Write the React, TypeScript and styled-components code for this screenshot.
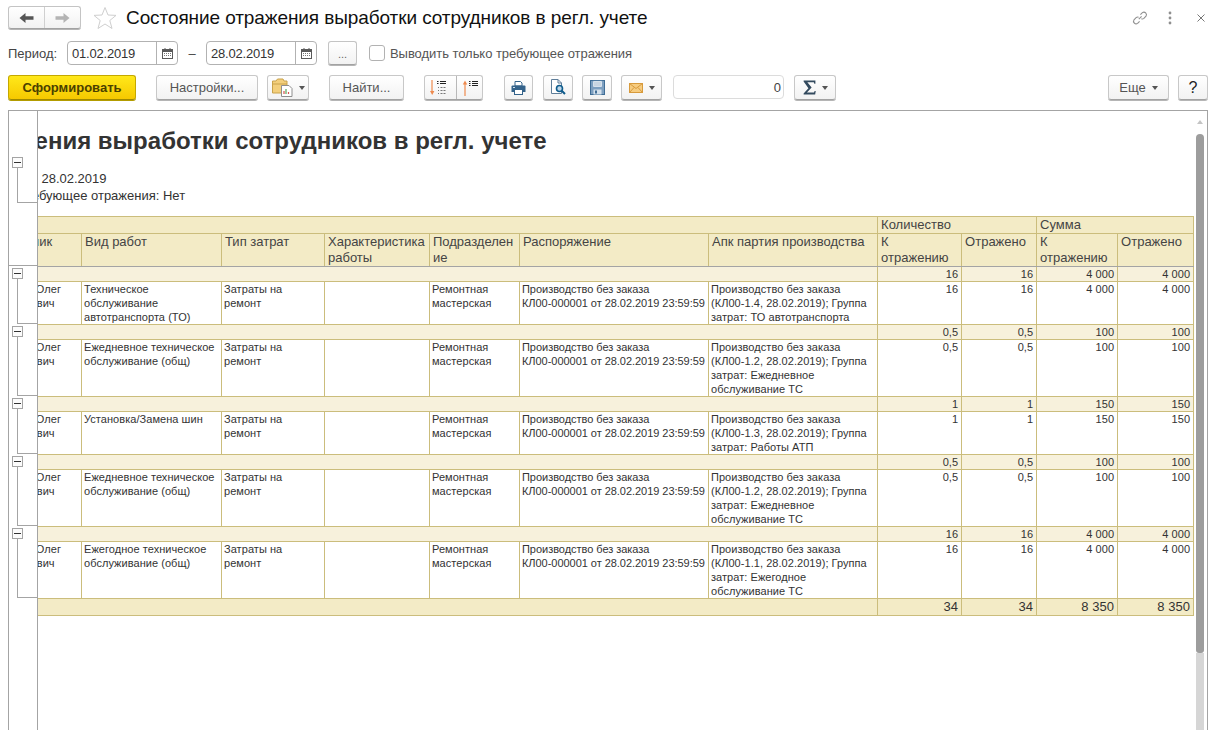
import styled, {createGlobalStyle} from "styled-components";
import type {ReactNode} from "react";

const GlobalStyle = createGlobalStyle`
  html, body {
    margin: 0;
    height: 100%;
    background: #fff;
    overflow: hidden;
  }
  #root {
    height: 100%;
  }
`;

const Page = styled.div`
  height: 730px;
  display: flex;
  flex-direction: column;
  padding: 5px 6px 0 8px;
  box-sizing: border-box;
  font-family: "Liberation Sans", Arial, sans-serif;
  font-size: 13px;
  color: #333;
  overflow: hidden;
`;

const TitleRow = styled.div`
  display: flex;
  align-items: center;
  height: 25px;
`;

const NavGroup = styled.div`
  display: flex;
  width: 73px;
  height: 23px;
  box-sizing: border-box;
  border: 1px solid #c4c4c4;
  border-bottom-color: #a2a2a2;
  border-radius: 3px;
  background: linear-gradient(#fff, #f2f2f2);
  box-shadow: 0 1px 0 #b5b5b5;
`;

const NavCell = styled.div<{$divider?: boolean}>`
  flex: 1;
  display: flex;
  align-items: center;
  justify-content: center;
  border-left: ${p => (p.$divider ? "1px solid #d0d0d0" : "none")};
`;

const StarWrap = styled.div`
  display: flex;
  margin-left: 12px;
`;

const WindowTitle = styled.h1`
  margin: 0 0 0 9px;
  font-size: 19px;
  font-weight: 400;
  color: #111;
  letter-spacing: -0.09px;
  white-space: nowrap;
`;

const WindowTools = styled.div`
  margin-left: auto;
  display: flex;
  align-items: center;
  gap: 20px;
  padding-right: 3px;
`;

const FilterRow = styled.div`
  display: flex;
  align-items: center;
  height: 24px;
  margin-top: 11px;
`;

const FieldLabel = styled.span`
  width: 59px;
  color: #444;
`;

const DateField = styled.div`
  display: flex;
  width: 111px;
  height: 24px;
  box-sizing: border-box;
  border: 1px solid #b2b2b2;
  border-radius: 4px;
  background: #fff;
`;

const DateValue = styled.div`
  flex: 1;
  display: flex;
  align-items: center;
  padding-left: 4px;
  color: #333;
  letter-spacing: -0.2px;
`;

const CalendarCell = styled.div`
  width: 20px;
  display: flex;
  align-items: center;
  justify-content: center;
  border-left: 1px solid #b2b2b2;
`;

const Dash = styled.span`
  width: 28px;
  text-align: center;
  color: #444;
`;

const DotsButton = styled.div`
  width: 29px;
  height: 24px;
  margin: -1px 0 0 11px;
  padding-top: 3px;
  box-sizing: border-box;
  display: flex;
  align-items: center;
  justify-content: center;
  border: 1px solid #c4c4c4;
  border-bottom-color: #a2a2a2;
  border-radius: 3px;
  background: linear-gradient(#fff, #f2f2f2);
  box-shadow: 0 1px 0 #b5b5b5;
  color: #666;
  font-size: 11px;
`;

const CheckBox = styled.span`
  width: 14px;
  height: 14px;
  margin-left: 12px;
  border: 1px solid #b2b2b2;
  border-radius: 3px;
  background: #fff;
`;

const CheckLabel = styled.span`
  margin-left: 5px;
  color: #555;
  letter-spacing: -0.05px;
`;

const CommandRow = styled.div`
  display: flex;
  align-items: flex-start;
  height: 26px;
  margin-top: 10px;
`;

const Button = styled.div<{$w: number; $ml?: number; $primary?: boolean; $strong?: boolean}>`
  width: ${p => p.$w}px;
  height: 25px;
  margin-left: ${p => p.$ml ?? 0}px;
  flex: none;
  box-sizing: border-box;
  display: flex;
  align-items: center;
  justify-content: center;
  gap: 6px;
  border: 1px solid ${p => (p.$primary ? "#c4a800" : "#c8c8c8")};
  border-bottom-color: ${p => (p.$primary ? "#a08a00" : "#a2a2a2")};
  border-radius: 3px;
  background: ${p => (p.$primary ? "linear-gradient(#ffe81a, #f6c900)" : "linear-gradient(#fff, #f2f2f2)")};
  box-shadow: 0 1px 0 ${p => (p.$primary ? "#b39c00" : "#b5b5b5")};
  color: ${p => (p.$primary ? "#4a4000" : p.$strong ? "#222" : "#555")};
  font-size: ${p => (p.$strong ? 16 : 13)}px;
  font-weight: ${p => (p.$primary ? 700 : 400)};
`;

const CommandSpacer = styled.div`
  flex: 1;
`;

const SplitCell = styled.div<{$divider?: boolean}>`
  flex: 1;
  height: 100%;
  display: flex;
  align-items: center;
  justify-content: center;
  border-left: ${p => (p.$divider ? "1px solid #b8b8b8" : "none")};
`;

const Caret = styled.span`
  width: 0;
  height: 0;
  border: 3px solid transparent;
  border-top: 4px solid #555;
  border-bottom: 0;
`;

const SumField = styled.div`
  width: 111px;
  height: 24px;
  margin-left: 11px;
  flex: none;
  box-sizing: border-box;
  display: flex;
  align-items: center;
  justify-content: flex-end;
  padding-right: 2px;
  border: 1px solid #dcdcdc;
  border-radius: 4px;
  color: #444;
`;

const Panel = styled.div`
  flex: 1;
  min-height: 0;
  display: flex;
  margin-top: 9px;
  border: 1px solid #a4a4a4;
  border-bottom: 0;
`;

const Gutter = styled.div`
  width: 28px;
  flex: none;
  display: flex;
  flex-direction: column;
  border-right: 1px solid #a4a4a4;
`;

const GutterSpace = styled.div<{$h: number}>`
  height: ${p => p.$h}px;
  flex: none;
`;

const GutterRule = styled.div`
  height: 1px;
  flex: none;
  background: #a4a4a4;
`;

const OutlineGroup = styled.div<{$h: number}>`
  height: ${p => p.$h}px;
  flex: none;
  display: flex;
  flex-direction: column;
  padding-left: 3px;
`;

const OutlineBox = styled.div`
  width: 11px;
  height: 11px;
  flex: none;
  box-sizing: border-box;
  display: flex;
  align-items: center;
  justify-content: center;
  border: 1px solid #a4a4a4;
  background: #fcfcfc;

  &::before {
    content: "";
    width: 7px;
    height: 1px;
    background: #333;
  }
`;

const OutlineStem = styled.div`
  flex: 1;
  margin-left: 5px;
  border-left: 1px solid #a4a4a4;
  border-bottom: 1px solid #a4a4a4;
`;

const ReportClip = styled.div`
  flex: 1;
  min-width: 0;
  overflow: hidden;
`;

const Report = styled.div`
  margin-left: -108px;
  width: 1300px;
`;

const ReportTitle = styled.h2`
  margin: 0 0 0 -100px;
  padding: 15px 0 0 0;
  height: 29px;
  font-size: 24px;
  line-height: 29px;
  font-weight: 700;
  color: #333;
  white-space: nowrap;
`;

const ReportLine = styled.div<{$first?: boolean}>`
  height: 17px;
  line-height: 17px;
  margin-top: ${p => (p.$first ? 15 : 0)}px;
  margin-left: -18px;
  color: #333;
  white-space: nowrap;
`;

const Table = styled.table`
  margin: 12px 0 0 55px;
  table-layout: fixed;
  width: 1208px;
  border-collapse: collapse;
  font-size: 11px;
  color: #333;
`;

const Head = styled.th<{$tall?: boolean}>`
  padding: 0 2px 0 3px;
  background: #f3ebc6;
  border: 1px solid #cbbd7c;
  border-bottom-color: ${p => (p.$tall ? "#a4a4a4" : "#cbbd7c")};
  font-size: 13px;
  font-weight: 400;
  line-height: 16px;
  text-align: left;
  vertical-align: top;
  color: #444;
  overflow-wrap: anywhere;
`;

const Cell = styled.td<{$num?: boolean; $nowrap?: boolean}>`
  padding: 0 3px 0 2px;
  border: 1px solid #cbbd7c;
  line-height: 14px;
  vertical-align: top;
  text-align: ${p => (p.$num ? "right" : "left")};
  white-space: ${p => (p.$nowrap ? "nowrap" : "normal")};
  letter-spacing: ${p => (p.$nowrap ? -0.04 : 0.05)}px;
`;

const GroupRow = styled.tr`
  height: 15px;
  background: #f7f1dc;
`;

const TotalRow = styled.tr`
  height: 17px;
  background: #f3ebc6;

  td {
    font-size: 13px;
    line-height: 16px;
  }
`;

const ScrollBar = styled.div`
  width: 8px;
  margin: 0 3px 0 0;
  flex: none;
  display: flex;
  flex-direction: column;
`;

const ScrollArrow = styled.div`
  height: 23px;
  flex: none;
  display: flex;
  justify-content: center;
  padding-top: 9px;
  box-sizing: border-box;

  &::before {
    content: "";
    width: 0;
    height: 0;
    border: 3px solid transparent;
    border-top: 0;
    border-bottom: 4px solid #c4c4c4;
  }
`;

const ScrollThumb = styled.div`
  height: 519px;
  flex: none;
  border-radius: 4px 4px 3px 3px;
  background: #9d9d9d;
`;

const ScrollTrack = styled.div`
  flex: 1;
  background: #d6d6d6;
`;

const NavArrow = ({dir, color}: {dir: "left" | "right"; color: string}) => (
  <svg width="15" height="12" viewBox="0 0 15 12" style={{transform: dir === "right" ? "scaleX(-1)" : undefined}}>
    <path d="M0.5 6 L6.5 1 V4.3 H14.5 V7.7 H6.5 V11 Z" fill={color}/>
  </svg>
);

const StarIcon = () => (
  <svg width="24" height="24" viewBox="0 0 24 24">
    <path d="M12 1.5 L15 9 L23 9.4 L16.8 14.5 L19 22.5 L12 18 L5 22.5 L7.2 14.5 L1 9.4 L9 9 Z" fill="none" stroke="#cfcfcf" strokeWidth="1"/>
  </svg>
);

const LinkIcon = () => (
  <svg width="16" height="16" viewBox="0 0 16 16" fill="none" stroke="#8f8f8f" strokeWidth="1.1">
    <path d="M6.8 9.2 L9.6 6.4"/>
    <path d="M8.4 4.6 L10.4 2.6 A2.6 2.6 0 0 1 14 6.2 L11.9 8.3 A2.6 2.6 0 0 1 9.4 8.8"/>
    <path d="M7.6 11.4 L5.6 13.4 A2.6 2.6 0 0 1 2 9.8 L4.1 7.7 A2.6 2.6 0 0 1 6.6 7.2"/>
  </svg>
);

const DotsIcon = () => (
  <svg width="4" height="14" viewBox="0 0 4 14" fill="#8f8f8f">
    <circle cx="2" cy="2" r="1.4"/>
    <circle cx="2" cy="7" r="1.4"/>
    <circle cx="2" cy="12" r="1.4"/>
  </svg>
);

const CloseIcon = () => (
  <svg width="13" height="8" viewBox="-5 0 13 8" stroke="#777" strokeWidth="1" fill="none">
    <path d="M0.5 0.5 L7.5 7.5 M7.5 0.5 L0.5 7.5"/>
  </svg>
);

const CalendarIcon = () => (
  <svg width="11" height="11" viewBox="0 0 11 11">
    <rect x="0.5" y="1.5" width="10" height="9" fill="#fff" stroke="#5a5a5a"/>
    <rect x="0" y="1" width="11" height="3" fill="#5a5a5a"/>
    <path d="M3 0 V2 M8 0 V2" stroke="#5a5a5a"/>
    <path d="M2 5.5 H9 M2 7.5 H9" stroke="#777" strokeDasharray="1 1"/>
  </svg>
);

const FolderIcon = () => (
  <svg width="21" height="19" viewBox="0 0 21 19">
    <path d="M0.5 3 H4 L5.5 1 H11 L12 3 H15 V15 H0.5 Z" fill="#f3cf7c" stroke="#c9a24a"/>
    <path d="M0.5 6 H15" stroke="#c9a24a"/>
    <path d="M9.5 7.5 H17 L20 10.5 V18.5 H9.5 Z" fill="#fff" stroke="#8e8e8e"/>
    <path d="M12 16 V13 M16.5 16 V14" stroke="#d9534f" strokeWidth="1.2"/>
    <path d="M14 16 V11" stroke="#5aa55a" strokeWidth="1.2"/>
  </svg>
);

const SortDownIcon = () => (
  <svg width="16" height="16" viewBox="0 0 16 16">
    <path d="M2 0 V13" stroke="#ee8a4e" strokeWidth="1.2"/>
    <path d="M0 11 H4.4 L2.2 15 Z" fill="#ee8a4e"/>
    <path d="M7 1.5 H8.5 M10 1.5 H16 M7 3.5 H8.5 M10 3.5 H16" stroke="#222"/>
    <path d="M8 7.5 H9 M10.5 7.5 H16 M8 10.5 H9 M10.5 10.5 H16 M8 13.5 H9 M10.5 13.5 H16" stroke="#777" strokeDasharray="2 1"/>
  </svg>
);

const SortUpIcon = () => (
  <svg width="16" height="16" viewBox="0 0 16 16">
    <path d="M3 3 V16" stroke="#ee8a4e" strokeWidth="1.2"/>
    <path d="M0.8 4.5 H5.2 L3 0.5 Z" fill="#ee8a4e"/>
    <path d="M7 1.5 H8.5 M10 1.5 H16 M7 3.5 H8.5 M10 3.5 H16 M7 5.5 H8.5 M10 5.5 H16" stroke="#222"/>
  </svg>
);

const PrintIcon = () => (
  <svg width="15" height="14" viewBox="0 0 15 14">
    <path d="M4 0.5 H9.5 L11 2 V5 H4 Z" fill="#fff" stroke="#33628a"/>
    <path d="M1.5 4.5 H13.5 Q14.5 4.5 14.5 5.5 V11 H0.5 V5.5 Q0.5 4.5 1.5 4.5Z" fill="#33628a"/>
    <rect x="3.5" y="8.5" width="8" height="5" fill="#fff" stroke="#33628a"/>
    <rect x="2" y="6" width="2" height="1" fill="#cfe0ee"/>
  </svg>
);

const PreviewIcon = () => (
  <svg width="15" height="17" viewBox="0 0 15 17">
    <path d="M0.5 0.5 H7 L10.5 4 V14.5 H0.5 Z" fill="#fff" stroke="#5e7d99"/>
    <path d="M7 0.5 V4 H10.5" fill="none" stroke="#5e7d99"/>
    <circle cx="8.5" cy="9.5" r="3" fill="#bcd7ea" stroke="#0f5c8c" strokeWidth="1.6"/>
    <path d="M10.7 11.7 L14 15" stroke="#0f5c8c" strokeWidth="2"/>
  </svg>
);

const SaveIcon = () => (
  <svg width="15" height="15" viewBox="0 0 15 15">
    <rect x="0.5" y="0.5" width="14" height="14" fill="#7d9fc0" stroke="#3f6d96"/>
    <rect x="3" y="1" width="9" height="6" fill="#f4f7fa" stroke="#7d9fc0" strokeWidth="0.5"/>
    <path d="M4 3 H11 M4 5 H11" stroke="#9db4ca"/>
    <rect x="3.5" y="9.5" width="8" height="5" fill="#d5e1ec"/>
    <rect x="5" y="10.5" width="2" height="3" fill="#3f6d96"/>
  </svg>
);

const MailIcon = () => (
  <svg width="14" height="10" viewBox="0 0 14 10">
    <rect x="0.5" y="0.5" width="13" height="9" fill="#f6cc80" stroke="#d79a3c"/>
    <path d="M0.5 0.5 L7 5.5 L13.5 0.5 M0.5 9.5 L5 4.5 M13.5 9.5 L9 4.5" fill="none" stroke="#d79a3c"/>
  </svg>
);

const SigmaIcon = () => (
  <svg width="13" height="15" viewBox="0 0 12 14">
    <path d="M0.5 0.5 H11.5 V3.5 H10.5 L10 2.2 H4 L8 7 L3.6 11.6 H10.2 L10.8 10.2 H11.8 L11.3 13.5 H0.5 V12.6 L5 7.6 L0.5 1.5 Z" fill="#334a5e"/>
  </svg>
);

const columns = [96, 140, 103, 105, 90, 189, 169, 84, 75, 81, 76];

type Row = {
  work: ReactNode;
  batch: ReactNode;
  height: number;
  qty: string;
  sum: string;
};

const rows: Row[] = [
  {
    work: "Техническое обслуживание автотранспорта (ТО)",
    batch: <>Производство без заказа (КЛ00-1.4, 28.02.2019); Группа затрат: ТО автотранспорта</>,
    height: 43,
    qty: "16",
    sum: "4 000",
  },
  {
    work: "Ежедневное техническое обслуживание (общ)",
    batch: <>Производство без заказа (КЛ00-1.2, 28.02.2019); Группа затрат: Ежедневное обслуживание ТС</>,
    height: 57,
    qty: "0,5",
    sum: "100",
  },
  {
    work: "Установка/Замена шин",
    batch: <>Производство без заказа (КЛ00-1.3, 28.02.2019); Группа затрат: Работы АТП</>,
    height: 43,
    qty: "1",
    sum: "150",
  },
  {
    work: "Ежедневное техническое обслуживание (общ)",
    batch: <>Производство без заказа (КЛ00-1.2, 28.02.2019); Группа затрат: Ежедневное обслуживание ТС</>,
    height: 57,
    qty: "0,5",
    sum: "100",
  },
  {
    work: "Ежегодное техническое обслуживание (общ)",
    batch: <>Производство без заказа (КЛ00-1.1, 28.02.2019); Группа затрат: Ежегодное обслуживание ТС</>,
    height: 57,
    qty: "16",
    sum: "4 000",
  },
];

const outlineHeights = [56, 70, 56, 70, 70];

function App() {
  return (
    <Page>
      <GlobalStyle/>
      <TitleRow>
        <NavGroup>
          <NavCell><NavArrow dir="left" color="#555"/></NavCell>
          <NavCell $divider><NavArrow dir="right" color="#b4b4b4"/></NavCell>
        </NavGroup>
        <StarWrap><StarIcon/></StarWrap>
        <WindowTitle>Состояние отражения выработки сотрудников в регл. учете</WindowTitle>
        <WindowTools>
          <LinkIcon/>
          <DotsIcon/>
          <CloseIcon/>
        </WindowTools>
      </TitleRow>

      <FilterRow>
        <FieldLabel>Период:</FieldLabel>
        <DateField>
          <DateValue>01.02.2019</DateValue>
          <CalendarCell><CalendarIcon/></CalendarCell>
        </DateField>
        <Dash>–</Dash>
        <DateField>
          <DateValue>28.02.2019</DateValue>
          <CalendarCell><CalendarIcon/></CalendarCell>
        </DateField>
        <DotsButton>...</DotsButton>
        <CheckBox/>
        <CheckLabel>Выводить только требующее отражения</CheckLabel>
      </FilterRow>

      <CommandRow>
        <Button $w={128} $primary>Сформировать</Button>
        <Button $w={102} $ml={20}>Настройки...</Button>
        <Button $w={42} $ml={9}><FolderIcon/><Caret/></Button>
        <Button $w={75} $ml={20}>Найти...</Button>
        <Button $w={59} $ml={20}>
          <SplitCell><SortDownIcon/></SplitCell>
          <SplitCell $divider><SortUpIcon/></SplitCell>
        </Button>
        <Button $w={29} $ml={21}><PrintIcon/></Button>
        <Button $w={30} $ml={10}><PreviewIcon/></Button>
        <Button $w={30} $ml={9}><SaveIcon/></Button>
        <Button $w={41} $ml={9}><MailIcon/><Caret/></Button>
        <SumField>0</SumField>
        <Button $w={42} $ml={10}><SigmaIcon/><Caret/></Button>
        <CommandSpacer/>
        <Button $w={61}>Еще<Caret/></Button>
        <Button $w={30} $ml={9} $strong>?</Button>
      </CommandRow>

      <Panel>
        <Gutter>
          <GutterSpace $h={46}/>
          <OutlineGroup $h={46}>
            <OutlineBox/>
            <OutlineStem/>
          </OutlineGroup>
          <GutterSpace $h={62}/>
          <GutterRule/>
          <GutterSpace $h={2}/>
          {outlineHeights.map((h, i) => (
            <div key={i}>
              <OutlineGroup $h={h}>
                <OutlineBox/>
                <OutlineStem/>
              </OutlineGroup>
              <GutterSpace $h={2}/>
            </div>
          ))}
        </Gutter>

        <ReportClip>
          <Report>
            <ReportTitle>Состояние отражения выработки сотрудников в регл. учете</ReportTitle>
            <ReportLine $first>Период: 01.02.2019 - 28.02.2019</ReportLine>
            <ReportLine>Выводить только требующее отражения: Нет</ReportLine>
            <Table>
              <colgroup>
                {columns.map((w, i) => <col key={i} style={{width: w}}/>)}
              </colgroup>
              <thead>
                <tr style={{height: 17}}>
                  <Head colSpan={7}/>
                  <Head colSpan={2}>Количество</Head>
                  <Head colSpan={2}>Сумма</Head>
                </tr>
                <tr style={{height: 33}}>
                  <Head $tall>Сотрудник</Head>
                  <Head $tall>Вид работ</Head>
                  <Head $tall>Тип затрат</Head>
                  <Head $tall>Характеристика работы</Head>
                  <Head $tall>Подразделение</Head>
                  <Head $tall>Распоряжение</Head>
                  <Head $tall>Апк партия производства</Head>
                  <Head $tall>К<br/>отражению</Head>
                  <Head $tall>Отражено</Head>
                  <Head $tall>К<br/>отражению</Head>
                  <Head $tall>Отражено</Head>
                </tr>
              </thead>
              <tbody>
                {rows.map((r, i) => [
                  <GroupRow key={`g${i}`}>
                    <Cell colSpan={7}/>
                    <Cell $num>{r.qty}</Cell>
                    <Cell $num>{r.qty}</Cell>
                    <Cell $num>{r.sum}</Cell>
                    <Cell $num>{r.sum}</Cell>
                  </GroupRow>,
                  <tr key={`r${i}`} style={{height: r.height}}>
                    <Cell>Морозов Олег Анатольевич</Cell>
                    <Cell>{r.work}</Cell>
                    <Cell>Затраты на ремонт</Cell>
                    <Cell/>
                    <Cell>Ремонтная мастерская</Cell>
                    <Cell $nowrap>Производство без заказа<br/>КЛ00-000001 от 28.02.2019 23:59:59</Cell>
                    <Cell>{r.batch}</Cell>
                    <Cell $num>{r.qty}</Cell>
                    <Cell $num>{r.qty}</Cell>
                    <Cell $num>{r.sum}</Cell>
                    <Cell $num>{r.sum}</Cell>
                  </tr>,
                ])}
                <TotalRow>
                  <Cell colSpan={7}/>
                  <Cell $num>34</Cell>
                  <Cell $num>34</Cell>
                  <Cell $num>8 350</Cell>
                  <Cell $num>8 350</Cell>
                </TotalRow>
              </tbody>
            </Table>
          </Report>
        </ReportClip>

        <ScrollBar>
          <ScrollArrow/>
          <ScrollThumb/>
          <ScrollTrack/>
        </ScrollBar>
      </Panel>
    </Page>
  );
}

export default App;
